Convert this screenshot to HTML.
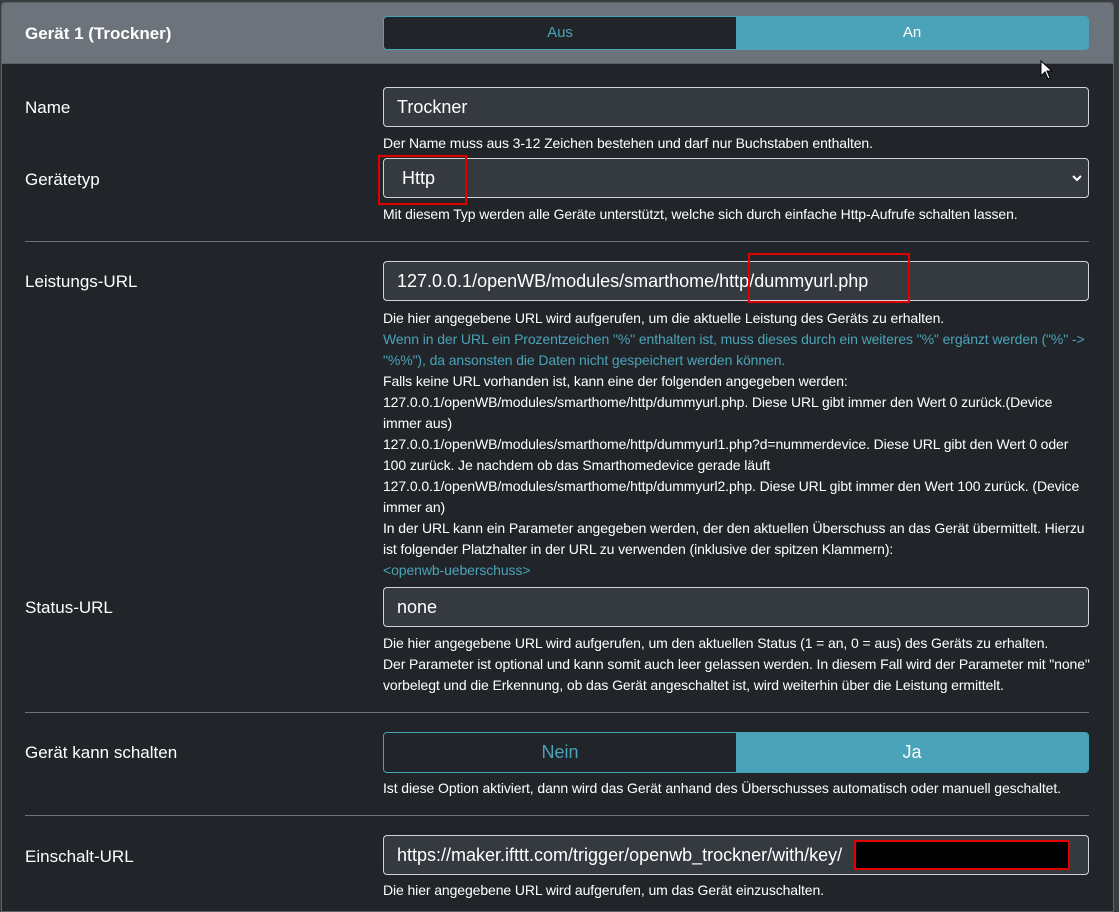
<!DOCTYPE html>
<html><head><meta charset="utf-8"><style>
*{box-sizing:border-box;margin:0;padding:0}
body{width:1119px;height:900px;overflow:hidden;background:#3a3d40;font-family:"Liberation Sans",sans-serif;color:#fff;position:relative}
.card{position:absolute;left:1px;top:2px;width:1113px;height:910px;background:#212529;border:1px solid #5c6167;border-radius:4px 4px 0 0;overflow:hidden}
.hdr{position:absolute;left:0;top:0;width:100%;height:61px;background:#6c737a;border-bottom:1px solid #5a6066}
.abs{position:absolute}
.lbl{position:absolute;left:23px;font-size:17px;color:#fff}
.inp{position:absolute;left:381px;width:706px;height:40px;background:#343a40;border:1px solid #ced4da;border-radius:4px;font-size:18px;padding-left:13px;line-height:38px;color:#fff;white-space:nowrap}
.help{position:absolute;left:381px;width:708px;font-size:14px;line-height:21px;color:#fff;letter-spacing:-0.1px}
.teal{color:#4aa3b8}
.hr{position:absolute;left:23px;width:1064px;height:1px;background:#6c737a}
.red{position:absolute;border:2px solid #e00000}
.tog{position:absolute;left:381px;width:706px;display:flex;border:1px solid #4aa3b8;border-radius:4px;overflow:hidden}
.tog div{flex:1;text-align:center}
.off{background:#212529;color:#4aa3b8}
.on{background:#4aa3b8;color:#fff}
</style></head><body>
<div class="card">
<div class="hdr"></div>
<div class="abs" style="left:23px;top:21px;font-size:17px;font-weight:bold">Gerät 1 (Trockner)</div>
<div class="tog" style="top:13px;height:34px;font-size:15px;line-height:32px"><div class="off">Aus</div><div class="on">An</div></div>
<svg class="abs" style="left:1038px;top:57px" width="14" height="20" viewBox="0 0 14 20"><path d="M1 1 L1 16 L5 12 L8 19 L10 18 L7 11 L12 11 Z" fill="#fff" stroke="#000" stroke-width="1"/></svg>

<div class="lbl" style="top:95px">Name</div>
<div class="inp" style="top:84px">Trockner</div>
<div class="help" style="top:130px">Der Name muss aus 3-12 Zeichen bestehen und darf nur Buchstaben enthalten.</div>

<div class="lbl" style="top:167px">Gerätetyp</div>
<div class="inp" style="top:155px">&nbsp;Http<svg style="position:absolute;right:6px;top:15px" width="10" height="8" viewBox="0 0 10 8"><path d="M1 2 L5 6 L9 2" stroke="#fff" stroke-width="2" fill="none"/></svg></div>
<div class="red" style="left:376px;top:152px;width:89px;height:50px"></div>
<div class="help" style="top:201px">Mit diesem Typ werden alle Geräte unterstützt, welche sich durch einfache Http-Aufrufe schalten lassen.</div>

<div class="hr" style="top:238px"></div>

<div class="lbl" style="top:269px">Leistungs-URL</div>
<div class="inp" style="top:258px">127.0.0.1/openWB/modules/smarthome/http/dummyurl.php</div>
<div class="red" style="left:746px;top:250px;width:162px;height:50px"></div>
<div class="help" style="top:305px">Die hier angegebene URL wird aufgerufen, um die aktuelle Leistung des Geräts zu erhalten.<br><span class="teal">Wenn in der URL ein Prozentzeichen "%" enthalten ist, muss dieses durch ein weiteres "%" ergänzt werden ("%" -&gt; "%%"), da ansonsten die Daten nicht gespeichert werden können.</span><br>Falls keine URL vorhanden ist, kann eine der folgenden angegeben werden:<br>127.0.0.1/openWB/modules/smarthome/http/dummyurl.php. Diese URL gibt immer den Wert 0 zurück.(Device immer aus)<br>127.0.0.1/openWB/modules/smarthome/http/dummyurl1.php?d=nummerdevice. Diese URL gibt den Wert 0 oder 100 zurück. Je nachdem ob das Smarthomedevice gerade läuft<br>127.0.0.1/openWB/modules/smarthome/http/dummyurl2.php. Diese URL gibt immer den Wert 100 zurück. (Device immer an)<br>In der URL kann ein Parameter angegeben werden, der den aktuellen Überschuss an das Gerät übermittelt. Hierzu ist folgender Platzhalter in der URL zu verwenden (inklusive der spitzen Klammern):<br><span class="teal">&lt;openwb-ueberschuss&gt;</span></div>

<div class="lbl" style="top:595px">Status-URL</div>
<div class="inp" style="top:584px">none</div>
<div class="help" style="top:630px">Die hier angegebene URL wird aufgerufen, um den aktuellen Status (1 = an, 0 = aus) des Geräts zu erhalten.<br>Der Parameter ist optional und kann somit auch leer gelassen werden. In diesem Fall wird der Parameter mit "none" vorbelegt und die Erkennung, ob das Gerät angeschaltet ist, wird weiterhin über die Leistung ermittelt.</div>

<div class="hr" style="top:709px"></div>

<div class="lbl" style="top:740px">Gerät kann schalten</div>
<div class="tog" style="top:729px;height:41px;font-size:18px;line-height:39px"><div class="off">Nein</div><div class="on">Ja</div></div>
<div class="help" style="top:775px">Ist diese Option aktiviert, dann wird das Gerät anhand des Überschusses automatisch oder manuell geschaltet.</div>

<div class="hr" style="top:812px"></div>

<div class="lbl" style="top:844px">Einschalt-URL</div>
<div class="inp" style="top:832px">https://maker.ifttt.com/trigger/openwb_trockner/with/key/</div>
<div class="red" style="left:852px;top:837px;width:216px;height:30px;background:#000"></div>
<div class="help" style="top:877px">Die hier angegebene URL wird aufgerufen, um das Gerät einzuschalten.</div>
</div>
</body></html>
